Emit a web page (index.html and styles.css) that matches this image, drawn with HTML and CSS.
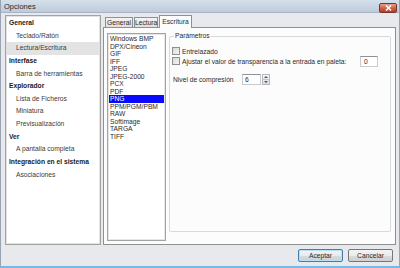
FILE: index.html
```html
<!DOCTYPE html>
<html>
<head>
<meta charset="utf-8">
<title>Opciones</title>
<link rel="stylesheet" href="styles.css">
</head>
<body>
  <div class="window">
    <div class="titlebar">
      <span class="title">Opciones</span>
      <span class="close">
        <svg width="7" height="6" viewBox="0 0 7 6"><path d="M1 0.5 L6 5.5 M6 0.5 L1 5.5" stroke="#fff" stroke-width="1.6"/></svg>
      </span>
    </div>

    <div class="content">
      <div class="main">
        <ul class="tree">
          <li class="cat">General</li>
          <li class="item">Teclado/Ratón</li>
          <li class="item selected">Lectura/Escritura</li>
          <li class="cat">Interfase</li>
          <li class="item">Barra de herramientas</li>
          <li class="cat">Explorador</li>
          <li class="item">Lista de Ficheros</li>
          <li class="item">Miniatura</li>
          <li class="item">Previsualización</li>
          <li class="cat">Ver</li>
          <li class="item">A pantalla completa</li>
          <li class="cat">Integración en el sistema</li>
          <li class="item">Asociaciones</li>
        </ul>

        <div class="tabs">
          <div class="tabstrip">
            <span class="tab tab-general">General</span>
            <span class="tab tab-lectura">Lectura</span>
            <span class="tab tab-escritura active">Escritura</span>
          </div>
          <div class="panel">
            <ul class="formats">
              <li>Windows BMP</li>
              <li>DPX/Cineon</li>
              <li>GIF</li>
              <li>IFF</li>
              <li>JPEG</li>
              <li>JPEG-2000</li>
              <li>PCX</li>
              <li>PDF</li>
              <li class="selected">PNG</li>
              <li>PPM/PGM/PBM</li>
              <li>RAW</li>
              <li>Softimage</li>
              <li>TARGA</li>
              <li>TIFF</li>
            </ul>

            <fieldset class="params">
              <legend>Parámetros</legend>
              <div class="row first">
                <span class="check"></span>
                <span>Entrelazado</span>
              </div>
              <div class="row">
                <span class="check"></span>
                <span>Ajustar el valor de transparencia a la entrada en paleta:</span>
                <span class="textbox">0</span>
              </div>
              <div class="row level">
                <span class="level-label">Nivel de compresión</span>
                <span class="spin-value">6</span>
                <span class="spin-arrows">
                  <span class="arrow up"></span>
                  <span class="arrow down"></span>
                </span>
              </div>
            </fieldset>
          </div>
        </div>
      </div>

      <div class="buttons">
        <span class="button default">Aceptar</span>
        <span class="button">Cancelar</span>
      </div>
    </div>
  </div>
</body>
</html>
```

FILE: styles.css
```css
html, body {
  margin: 0;
  padding: 0;
}
body {
  width: 400px;
  height: 268px;
  overflow: hidden;
  background: #fff;
  color: #2a2a2a;
  font-family: "Liberation Sans", Arial, sans-serif;
  font-size: 6.7px;
}
ul {
  list-style: none;
  margin: 0;
  padding: 0;
}

.window {
  box-sizing: border-box;
  width: 400px;
  height: 268px;
  display: flex;
  flex-direction: column;
  background: #e8e9ed;
  border-left: 1px solid #98a4b1;
  border-right: 1px solid #98a4b1;
  border-bottom: 2px solid #78b8e6;
}

/* title bar */
.titlebar {
  box-sizing: border-box;
  height: 13px;
  display: flex;
  justify-content: space-between;
  align-items: flex-start;
  background: linear-gradient(#d6e0eb, #bdcbdc);
  border-bottom: 1px solid #a6b4c4;
}
.title {
  padding: 2px 0 0 3px;
  font-size: 7.5px;
  color: #2a2a2a;
}
.close {
  box-sizing: border-box;
  width: 18px;
  height: 10px;
  margin: 3px 2px 0 0;
  display: flex;
  align-items: center;
  justify-content: center;
  border: 1px solid #7c3426;
  border-radius: 2px;
  background: linear-gradient(#e8a48f, #d0634b 50%, #b93b22);
}

/* body */
.content {
  flex: 1;
  display: flex;
  flex-direction: column;
  gap: 4px;
  padding: 2px 3px 4px 4px;
}
.main {
  flex: 1;
  display: flex;
  gap: 2px;
}

/* left tree */
.tree {
  box-sizing: border-box;
  width: 96px;
  padding: 1px 1px 0 1px;
  background: #fff;
  border: 1px solid #a3a3a3;
  box-shadow: inset 0 0 0 1px #e2e2e2;
}
.tree li {
  height: 12.65px;
  line-height: 12.65px;
  white-space: nowrap;
}
.tree .cat {
  padding-left: 2px;
  font-weight: bold;
  color: #1a1a1a;
}
.tree .item {
  padding-left: 9px;
  color: #3a3a3a;
}
.tree .selected {
  background: #e3e3e3;
}

/* tabs */
.tabs {
  flex: 1;
  display: flex;
  flex-direction: column;
}
.tabstrip {
  height: 12px;
  display: flex;
  align-items: flex-end;
  padding-left: 2px;
  position: relative;
  z-index: 1;
}
.tab {
  box-sizing: border-box;
  height: 10px;
  line-height: 9px;
  text-align: center;
  white-space: nowrap;
  border: 1px solid #8f9090;
  border-bottom: none;
  background: linear-gradient(#f4f4f4, #dedede);
}
.tab-general {
  width: 28px;
  margin-right: 1px;
}
.tab-lectura {
  width: 24px;
  margin-right: 1px;
}
.tab-escritura {
  width: 33px;
}
.tab.active {
  height: 13px;
  line-height: 11px;
  margin-bottom: -1px;
  background: #fcfcfd;
}
.panel {
  flex: 1;
  display: flex;
  gap: 3px;
  padding: 5px 4px 3px 3px;
  background: #fcfcfd;
  border: 1px solid #8f9090;
}

/* format list */
.formats {
  box-sizing: border-box;
  width: 59px;
  padding-top: 1px;
  background: #fff;
  border: 1px solid #a3a3a3;
  box-shadow: inset 0 0 0 1px #e6e6e6;
}
.formats li {
  height: 7.54px;
  line-height: 7.54px;
  padding-left: 2px;
  white-space: nowrap;
}
.formats .selected {
  margin: 0 1px;
  padding-left: 1px;
  background: #0a0aff;
  color: #fff;
}

/* parameters group */
.params {
  flex: 1;
  align-self: flex-start;
  height: 200px;
  box-sizing: border-box;
  margin: -1px 0 0 0;
  padding: 0 2px;
  border: 1px solid #d5dadf;
  border-radius: 2px;
  min-width: 0;
}
.params legend {
  padding: 0 1px;
  margin-left: 2px;
  line-height: 8px;
}
.row {
  display: flex;
  align-items: center;
  height: 10px;
  white-space: nowrap;
}
.row.first {
  margin-top: 6px;
}
.row.level {
  height: 11px;
  margin-top: 8px;
  padding-left: 1px;
}
.check {
  box-sizing: border-box;
  width: 8px;
  height: 8px;
  margin-right: 2px;
  border: 1px solid #8e8f8f;
  background: linear-gradient(135deg, #d8d8d8, #f6f6f6);
}
.textbox {
  box-sizing: border-box;
  width: 18px;
  height: 11px;
  margin: 0 10px 0 auto;
  padding-left: 3px;
  line-height: 9px;
  background: #fff;
  border: 1px solid #c8cbd0;
  border-top-color: #8e9196;
}
.level-label {
  width: 69px;
}
.spin-value {
  box-sizing: border-box;
  width: 19px;
  height: 11px;
  padding-left: 2px;
  line-height: 9px;
  background: #fff;
  border: 1px solid #c8cbd0;
  border-top-color: #8e9196;
}
.spin-arrows {
  box-sizing: border-box;
  width: 8px;
  height: 11px;
  margin-left: 1px;
  display: flex;
  flex-direction: column;
  border: 1px solid #b4b7bb;
  background: linear-gradient(#f5f5f5, #dedede);
}
.arrow {
  flex: 1;
  display: flex;
  align-items: center;
  justify-content: center;
}
.arrow::after {
  content: "";
  border-left: 2px solid transparent;
  border-right: 2px solid transparent;
}
.arrow.up::after {
  border-bottom: 2px solid #3d5c7a;
}
.arrow.down {
  border-top: 1px solid #c4c7ca;
}
.arrow.down::after {
  border-top: 2px solid #3d5c7a;
}

/* dialog buttons */
.buttons {
  height: 13px;
  display: flex;
  justify-content: flex-end;
  gap: 5px;
  padding-right: 3px;
}
.button {
  box-sizing: border-box;
  width: 45px;
  height: 13px;
  line-height: 11px;
  text-align: center;
  border: 1px solid #767676;
  border-radius: 2px;
  background: linear-gradient(#f3f3f3, #ebebeb 50%, #dcdcdc 50%, #cfcfcf);
}
.button.default {
  border-color: #3c7fb1;
  box-shadow: inset 0 0 0 1px #b7e2f7;
}
```
